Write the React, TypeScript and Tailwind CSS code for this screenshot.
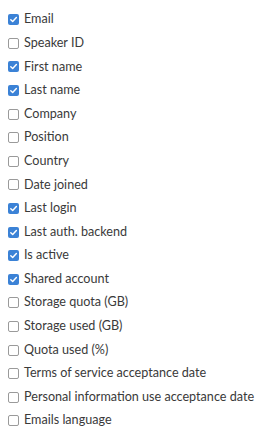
const columns: [string, boolean][] = [
  ["Email", true],
  ["Speaker ID", false],
  ["First name", true],
  ["Last name", true],
  ["Company", false],
  ["Position", false],
  ["Country", false],
  ["Date joined", false],
  ["Last login", true],
  ["Last auth. backend", true],
  ["Is active", true],
  ["Shared account", true],
  ["Storage quota (GB)", false],
  ["Storage used (GB)", false],
  ["Quota used (%)", false],
  ["Terms of service acceptance date", false],
  ["Personal information use acceptance date", false],
  ["Emails language", false],
];

function Box({ checked }: { checked: boolean }) {
  if (checked) {
    return (
      <span className="flex h-[11px] w-[11px] shrink-0 items-center justify-center rounded-[2px] bg-[#3b82d6]">
        <svg width="9" height="9" viewBox="0 0 10 10" fill="none">
          <path d="M2 5.2 4.1 7.3 8.2 2.8" stroke="white" strokeWidth="1.6" strokeLinecap="round" strokeLinejoin="round" />
        </svg>
      </span>
    );
  }
  return <span className="h-[11px] w-[11px] shrink-0 rounded-[2px] border border-[#9a9a9a] bg-white" />;
}

export default function App() {
  return (
    <div className="min-h-screen bg-white pt-[8px] pl-[8px] font-['Lato','Noto_Sans',sans-serif] text-[12.6px] text-[#3a3a3a]">
      {columns.map(([label, checked]) => (
        <div key={label} className="flex h-[23.6px] items-center gap-[5px] whitespace-nowrap">
          <Box checked={checked} />
          <span>{label}</span>
        </div>
      ))}
    </div>
  );
}
